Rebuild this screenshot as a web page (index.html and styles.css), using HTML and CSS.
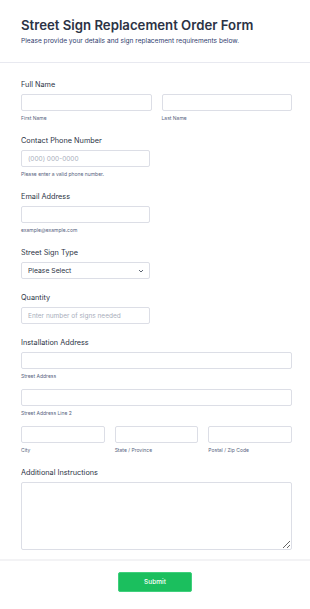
FILE: index.html
```html
<!DOCTYPE html>
<html lang="en">
<head>
    <meta charset="UTF-8">
    <meta name="viewport" content="width=device-width, initial-scale=1.0">
    <title>Street Sign Replacement Order Form</title>
    <link rel="stylesheet" href="styles.css">
</head>
<body>
    <div class="form-header">
        <h1>Street Sign Replacement Order Form</h1>
        <p>Please provide your details and sign replacement requirements below.</p>
    </div>
    <form class="form-body">
        <div class="field">
            <label class="field-label">Full Name</label>
            <div class="row two">
                <div class="col">
                    <input type="text">
                    <span class="sublabel">First Name</span>
                </div>
                <div class="col">
                    <input type="text">
                    <span class="sublabel">Last Name</span>
                </div>
            </div>
        </div>
        <div class="field">
            <label class="field-label">Contact Phone Number</label>
            <input type="tel" class="half" placeholder="(000) 000-0000">
            <span class="sublabel">Please enter a valid phone number.</span>
        </div>
        <div class="field">
            <label class="field-label">Email Address</label>
            <input type="email" class="half">
            <span class="sublabel">example@example.com</span>
        </div>
        <div class="field">
            <label class="field-label">Street Sign Type</label>
            <div class="select-wrap half">
                <select>
                    <option>Please Select</option>
                    <option>Stop Sign</option>
                    <option>Street Name Sign</option>
                    <option>Speed Limit Sign</option>
                </select>
                <svg class="chevron" width="6" height="4" viewBox="0 0 6 4"><path d="M1 1l2 2 2-2" fill="none" stroke="#4b5563" stroke-width="0.9"/></svg>
            </div>
        </div>
        <div class="field">
            <label class="field-label">Quantity</label>
            <input type="number" class="half" placeholder="Enter number of signs needed">
        </div>
        <div class="field">
            <label class="field-label">Installation Address</label>
            <input type="text">
            <span class="sublabel">Street Address</span>
            <input type="text" class="next">
            <span class="sublabel">Street Address Line 2</span>
            <div class="row three next">
                <div class="col">
                    <input type="text">
                    <span class="sublabel">City</span>
                </div>
                <div class="col">
                    <input type="text">
                    <span class="sublabel">State / Province</span>
                </div>
                <div class="col">
                    <input type="text">
                    <span class="sublabel">Postal / Zip Code</span>
                </div>
            </div>
        </div>
        <div class="field last">
            <label class="field-label">Additional Instructions</label>
            <textarea></textarea>
        </div>
    </form>
    <div class="form-footer">
        <button type="button" class="submit-btn">Submit</button>
    </div>
</body>
</html>
```

FILE: styles.css
```css
body {
    font-family: Inter, "Noto Sans", Arial, sans-serif;
    background-color: #fff;
    color: #2c3345;
    margin: 0;
    padding: 0;
}
.form-header {
    padding: 17px 18px 16px 21px;
    border-bottom: 1px solid #e8e9f0;
}
.form-header h1 {
    margin: 0;
    font-size: 13.2px;
    line-height: 17px;
    font-weight: 600;
    color: #2c3345;
}
.form-header p {
    margin: 3px 0 0;
    font-size: 6.6px;
    line-height: 9px;
    color: #2f3c6e;
}
.form-body {
    padding: 17px 18px 0 21px;
}
.field {
    margin-bottom: 14px;
}
.field.last {
    margin-bottom: 0;
}
.field-label {
    display: block;
    font-size: 7.3px;
    line-height: 10px;
    font-weight: 400;
    color: #2c3345;
    margin-bottom: 4px;
}
.sublabel {
    display: block;
    font-size: 5px;
    line-height: 7px;
    color: #57647e;
    margin-top: 4px;
}
input, select, textarea {
    display: block;
    box-sizing: border-box;
    width: 100%;
    height: 17px;
    margin: 0;
    padding: 0 6px;
    border: 1px solid #dcdee6;
    border-radius: 2px;
    background: #fff;
    font-family: Inter, "Noto Sans", Arial, sans-serif;
    font-size: 6.5px;
    color: #2c3345;
}
input::placeholder {
    color: #a8aebb;
}
.half {
    width: 129px;
}
.row {
    display: grid;
    gap: 10px;
}
.row.two {
    grid-template-columns: 1fr 1fr;
}
.row.three {
    grid-template-columns: 1fr 1fr 1fr;
}
.next {
    margin-top: 9px;
}
.select-wrap {
    position: relative;
}
.select-wrap select {
    appearance: none;
    -webkit-appearance: none;
    font-size: 6.8px;
    color: #2c3345;
}
.chevron {
    position: absolute;
    right: 6px;
    top: 7px;
}
textarea {
    height: 68px;
    padding: 4px 6px;
}
.form-footer {
    margin-top: 9px;
    border-top: 2px solid #f3f3f5;
    padding: 11px 0 17px;
    display: flex;
    justify-content: center;
}
.submit-btn {
    width: 74px;
    height: 20px;
    background-color: #1bbf5e;
    border: 1px solid #3fd07c;
    border-radius: 2px;
    color: #fff;
    font-family: Inter, "Noto Sans", Arial, sans-serif;
    font-size: 6.5px;
    font-weight: 500;
    cursor: pointer;
}
```
